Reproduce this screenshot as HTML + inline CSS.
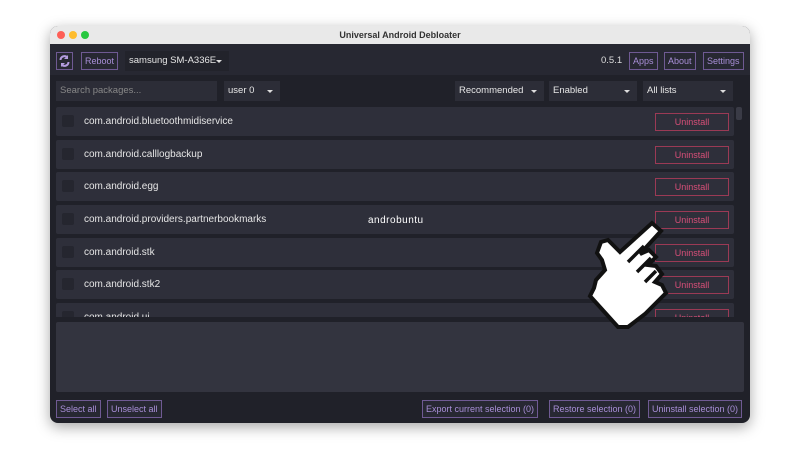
<!DOCTYPE html>
<html><head><meta charset="utf-8"><style>
*{margin:0;padding:0;box-sizing:border-box}
body{width:800px;height:450px;background:#fff;font-family:"Liberation Sans",sans-serif;position:relative;overflow:hidden}
.win{position:absolute;left:50px;top:26px;width:700px;height:397px;border-radius:8px;background:#202129;overflow:hidden;box-shadow:0 4px 14px rgba(0,0,0,.35)}
.title{height:18px;background:#e9e9e9;text-align:center;font-size:9px;font-weight:bold;color:#333;line-height:18px;position:relative}
.dot{position:absolute;top:5px;width:8px;height:8px;border-radius:50%}
.abs{position:absolute}
.btn{position:absolute;border:1px solid #6f5a93;color:#a98fd8;font-size:9px;line-height:16px;height:18px;padding:0 3px;background:#272832}
.dd{position:absolute;background:#2c2d37;color:#e6e6e6;font-size:9.5px;line-height:20px;height:20px;padding-left:4px}
.dd.a:after{content:"";position:absolute;right:7px;top:9px;border:3px solid transparent;border-top:3px solid #ddd}
.row{position:absolute;left:6px;width:678px;height:29px;background:#2e2f3a;border-radius:2px}
.cb{position:absolute;left:6px;top:8px;width:12px;height:12px;background:#25262f;border-radius:2px}
.pk{position:absolute;left:28px;top:9px;font-size:10px;color:#e6e6e6}
.un{position:absolute;left:599px;top:6px;width:74px;height:18px;border:1px solid #9b3a55;color:#d84f78;font-size:9px;text-align:center;line-height:16px}
</style></head><body>
<div class="win">
<div class="title"><span class="dot" style="left:7px;background:#fe5f57"></span><span class="dot" style="left:19px;background:#febc2e"></span><span class="dot" style="left:31px;background:#28c840"></span>Universal Android Debloater</div>
<div class="abs" style="left:0;top:18px;width:700px;height:31px;background:#272832"></div>
<div class="btn" style="left:6px;top:26px;width:17px;padding:0"><svg width="15" height="16" viewBox="0 0 15 16"><path d="M3.5 7a4 4 0 0 1 7-2.5M11.5 9a4 4 0 0 1-7 2.5" stroke="#b59de0" stroke-width="2" fill="none"/><path d="M11 2v4h-4zM4 14v-4h4z" fill="#b59de0"/></svg></div>
<div class="btn" style="left:31px;top:26px">Reboot</div>
<div class="dd a" style="left:75px;top:25px;width:104px;background:#22232b">samsung SM-A336E</div>
<div class="abs" style="left:551px;top:29px;font-size:9.5px;color:#ddd">0.5.1</div>
<div class="btn" style="left:579px;top:26px">Apps</div>
<div class="btn" style="left:614px;top:26px">About</div>
<div class="btn" style="left:653px;top:26px">Settings</div>
<div class="dd" style="left:6px;top:55px;width:161px;color:#888">Search packages...</div>
<div class="dd a" style="left:174px;top:55px;width:56px">user 0</div>
<div class="dd a" style="left:405px;top:55px;width:89px">Recommended</div>
<div class="dd a" style="left:499px;top:55px;width:88px">Enabled</div>
<div class="dd a" style="left:593px;top:55px;width:90px">All lists</div>
<div class="abs" style="left:686px;top:81px;width:6px;height:13px;background:#3a3b46;border-radius:2px"></div>
<div class="abs" style="left:0;top:80px;width:700px;height:211px;overflow:hidden">
<div class="row" style="top:1px"><div class="cb"></div><div class="pk">com.android.bluetoothmidiservice</div><div class="un">Uninstall</div></div>
<div class="row" style="top:34px"><div class="cb"></div><div class="pk">com.android.calllogbackup</div><div class="un">Uninstall</div></div>
<div class="row" style="top:66px"><div class="cb"></div><div class="pk">com.android.egg</div><div class="un">Uninstall</div></div>
<div class="row" style="top:99px"><div class="cb"></div><div class="pk">com.android.providers.partnerbookmarks</div><div class="un">Uninstall</div></div>
<div class="row" style="top:132px"><div class="cb"></div><div class="pk">com.android.stk</div><div class="un">Uninstall</div></div>
<div class="row" style="top:164px"><div class="cb"></div><div class="pk">com.android.stk2</div><div class="un">Uninstall</div></div>
<div class="row" style="top:197px"><div class="cb"></div><div class="pk">com.android.ui</div><div class="un">Uninstall</div></div>
</div>
<div class="abs" style="left:318px;top:189px;font-size:10px;color:#fff;letter-spacing:.5px">androbuntu</div>
<div class="abs" style="left:6px;top:296px;width:688px;height:70px;background:#33343f;border-radius:2px"></div>
<div class="btn" style="left:6px;top:374px">Select all</div>
<div class="btn" style="left:57px;top:374px">Unselect all</div>
<div class="btn" style="left:372px;top:374px">Export current selection (0)</div>
<div class="btn" style="left:499px;top:374px">Restore selection (0)</div>
<div class="btn" style="left:598px;top:374px">Uninstall selection (0)</div>
</div>
<svg class="abs" style="left:580px;top:220px" width="95" height="115" viewBox="0 0 95 115">
<path d="M72 3 L81 11 L60 34 L69 30 L76 37 L68 45 L76 46 L82 54 L75 62 L82 65 L86 73 L65 94 L48 107 L38 107 L10 76 L14 68 L16 60 L25 50 L22 40 L17 33 L21 22 L28 20 L34 26 L40 32 Z" fill="#fff" stroke="#111" stroke-width="4" stroke-linejoin="miter"/>
<path d="M48 42 L64 26 M57 52 L71 38 M65 62 L76 51" stroke="#111" stroke-width="3.5"/>
</svg>
</body></html>
